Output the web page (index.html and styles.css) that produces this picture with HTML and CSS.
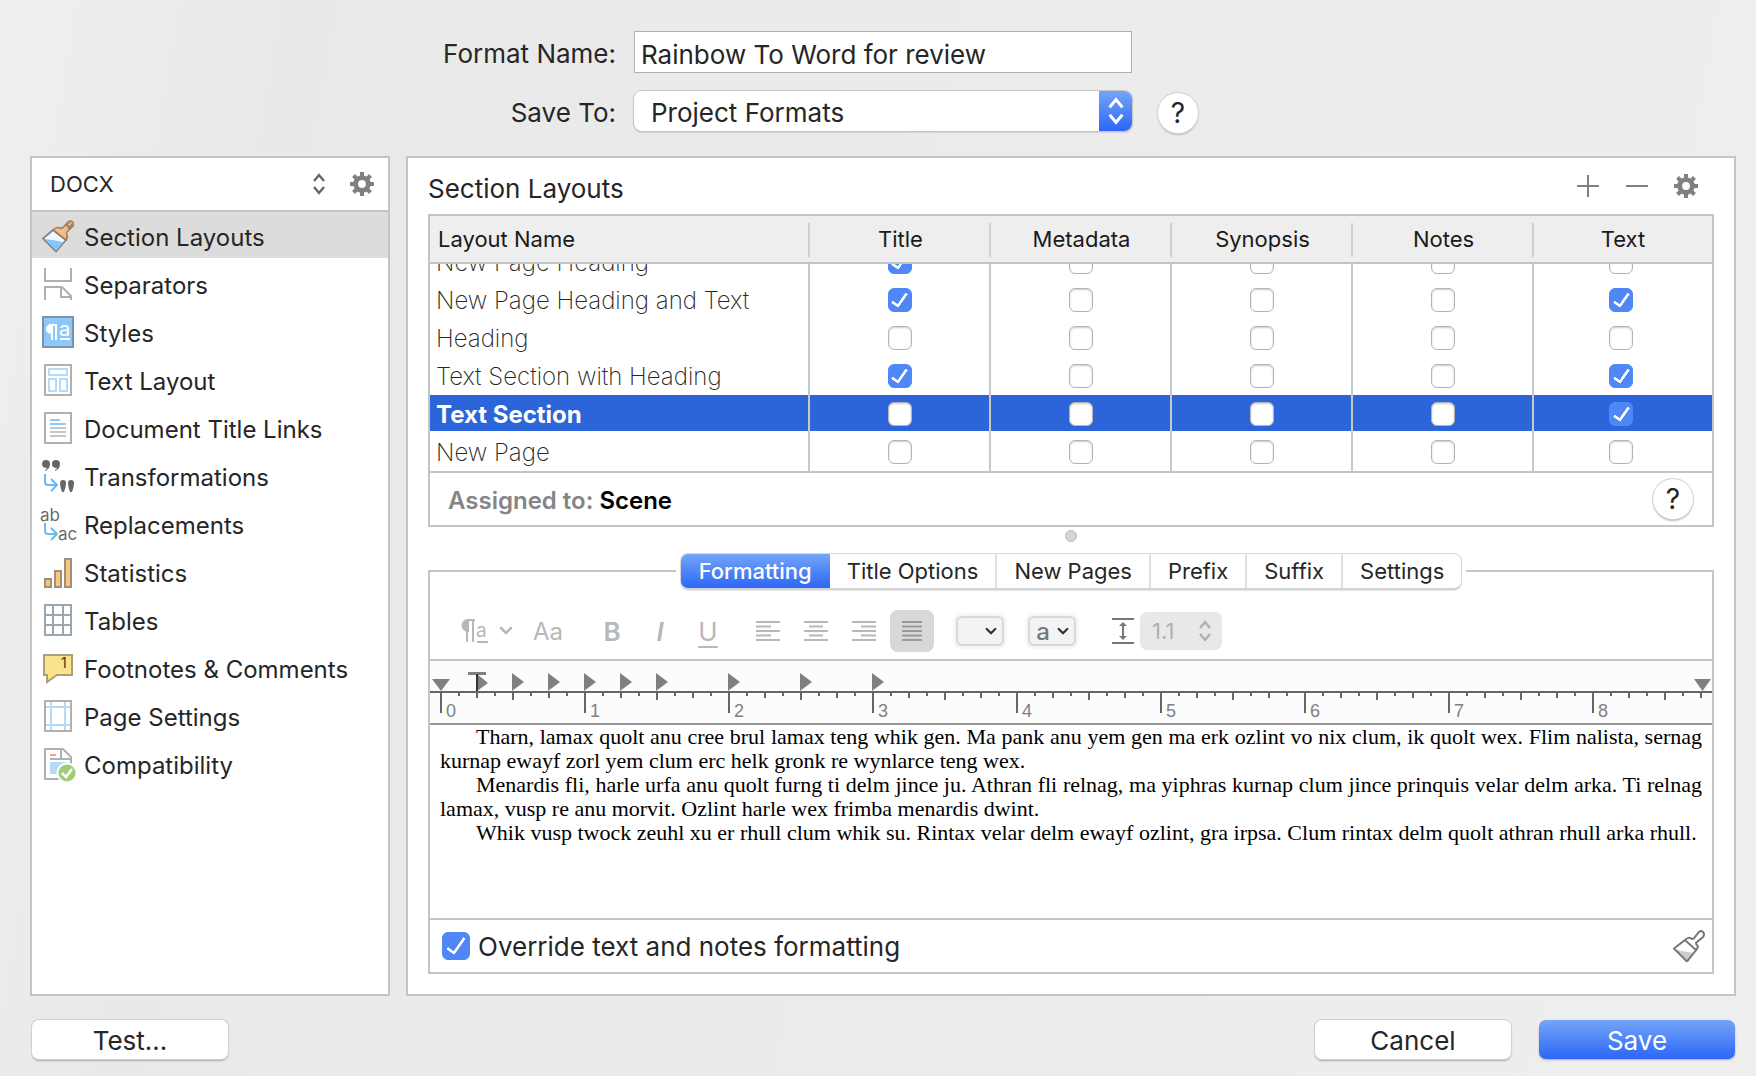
FILE: index.html
```html
<!DOCTYPE html>
<html lang="en">

<head>
    <meta charset="utf-8">
    <title>Compile Format Designer</title>
    <meta name="viewport" content="width=device-width, initial-scale=1.0">
    <link rel="stylesheet" href="styles.css">
</head>

<body>
    <!-- Shared shapes -->
    <svg class="symbols" aria-hidden="true">
        <symbol id="gear" viewBox="0 0 24 24">
            <g fill="currentColor">
                <rect x="10" y="0" width="4" height="24" />
                <rect x="10" y="0" width="4" height="24" transform="rotate(45 12 12)" />
                <rect x="10" y="0" width="4" height="24" transform="rotate(90 12 12)" />
                <rect x="10" y="0" width="4" height="24" transform="rotate(135 12 12)" />
            </g>
            <circle cx="12" cy="12" r="6.3" fill="none" stroke="currentColor" stroke-width="5" />
            <circle cx="12" cy="12" r="3.9" fill="#fff" />
        </symbol>
        <symbol id="up-down" viewBox="0 0 14 22">
            <path d="M2 8l5-6 5 6M2 14l5 6 5-6" fill="none" stroke="currentColor" stroke-width="2.4" />
        </symbol>
        <symbol id="chevron" viewBox="0 0 14 10">
            <path d="M2 2l5 5 5-5" fill="none" stroke="currentColor" stroke-width="2.6" stroke-linecap="round" stroke-linejoin="round" />
        </symbol>
        <symbol id="sub-arrow" viewBox="0 0 14 18">
            <path d="M1 0v8q0 3 3 3h8M7 5l6 6-6 6" fill="none" stroke="#6cb8f5" stroke-width="2" />
        </symbol>
    </svg>

    <header class="format-form">
        <label for="format-name">Format Name:</label>
        <input type="text" id="format-name" value="Rainbow To Word for review">

        <label for="save-to">Save To:</label>
        <div class="popup">
            <select id="save-to">
                <option>Project Formats</option>
            </select>
            <span class="popup-arrows"><svg width="18" height="28"><use href="#up-down" /></svg></span>
        </div>
        <button class="help" type="button">?</button>
    </header>

    <main>
        <!-- Sidebar -->
        <aside class="panel sidebar">
            <div class="file-type">
                <select aria-label="File type">
                    <option>DOCX</option>
                </select>
                <svg class="file-type-arrows" width="14" height="22"><use href="#up-down" /></svg>
                <button class="icon-button" type="button" aria-label="File type options"><svg width="24" height="24"><use href="#gear" /></svg></button>
            </div>
            <nav>
                <a class="selected" href="#">
                    <svg class="icon" viewBox="0 0 32 32">
                        <path d="M11 10L1 18.500l13 13L24 20z" fill="#f2f9fe" stroke="#71889b" stroke-width="1.800" />
                        <path d="M3 19q8 1 18 3l-7 8z" fill="#84c6f7" />
                        <path d="M11 10q4-4 8-1.500 2-.500 3-2L26 2q3-2 5 .500 1 2-.500 4L25 12q-1 1 0 3 1 2-1 5z" fill="#edc08e" stroke="#a57c58" stroke-width="1.600" />
                        <path d="M24 5l3-3 4 3-4 5z" fill="#a57c58" />
                        <circle cx="27.500" cy="4.500" r="1.200" fill="#e2c9af" />
                    </svg>
                    Section Layouts
                </a>
                <a href="#">
                    <svg class="icon" viewBox="0 0 32 32" fill="none" stroke="#b0b0b0" stroke-width="2">
                        <path d="M3 0v13h26V0M3 32V19h17l9 9v4M19 19v10h11" />
                    </svg>
                    Separators
                </a>
                <a href="#">
                    <svg class="icon" viewBox="0 0 32 32">
                        <rect x="1" y="1" width="30" height="30" fill="#8cc8fb" stroke="#7d92a5" stroke-width="2" />
                        <path d="M15 9H9a4 4 0 0 0 0 8h1v7M10 9v15M14 9v15M18 23h10" fill="none" stroke="#fff" stroke-width="2" />
                        <path d="M9 9a4 4 0 0 0 0 8z" fill="#fff" />
                        <text x="17" y="20" font-size="20" fill="#fff">a</text>
                    </svg>
                    Styles
                </a>
                <a href="#">
                    <svg class="icon" viewBox="0 0 32 32" fill="none" stroke-width="2">
                        <rect x="3" y="1" width="26" height="30" stroke="#b0b0b0" />
                        <path d="M7 5h18v6H7zM7 15h7v12H7zM18 15h7v12h-7z" stroke="#b5daf8" />
                    </svg>
                    Text Layout
                </a>
                <a href="#">
                    <svg class="icon" viewBox="0 0 32 32" fill="none" stroke-width="2">
                        <rect x="3" y="1" width="26" height="30" stroke="#b0b0b0" />
                        <path d="M8 8h10M8 12h16" stroke="#8cc8fb" />
                        <path d="M8 16h16M8 20h16M8 24h16" stroke="#c6c6c6" />
                    </svg>
                    Document Title Links
                </a>
                <a href="#">
                    <svg class="icon" viewBox="0 0 32 32">
                        <g fill="#666">
                            <path d="M0 4a4 4 0 0 1 8 0q0 5-5 7v-1q2-1 2-2-5 0-5-4zM10 4a4 4 0 0 1 8 0q0 5-5 7v-1q2-1 2-2-5 0-5-4z" />
                            <path d="M18 23a3 3 0 0 1 6 0q0 4-2 9h-2q-2-5-2-9zM26 23a3 3 0 0 1 6 0q0 4-2 9h-2q-2-5-2-9z" />
                        </g>
                        <use href="#sub-arrow" x="2" y="14" width="14" height="18" />
                    </svg>
                    Transformations
                </a>
                <a href="#">
                    <svg class="icon" viewBox="0 0 32 32" font-size="17" fill="#6a6a6a">
                        <text x="-2" y="13">ab</text>
                        <use href="#sub-arrow" x="2" y="15" width="14" height="18" />
                        <text x="16" y="32">ac</text>
                    </svg>
                    Replacements
                </a>
                <a href="#">
                    <svg class="icon" viewBox="0 0 32 32" fill="#f9c67f" stroke="#9e907d" stroke-width="2">
                        <path d="M3 23h6v8H3zM13 15h6v16h-6zM23 3h6v28h-6z" />
                    </svg>
                    Statistics
                </a>
                <a href="#">
                    <svg class="icon" viewBox="0 0 32 32" fill="none" stroke="#9aa6b0" stroke-width="2">
                        <path d="M3 1h26v30H3zM11 1v30M21 1v30M3 11h26M3 21h26" />
                    </svg>
                    Tables
                </a>
                <a href="#">
                    <svg class="icon" viewBox="0 0 32 32">
                        <path d="M2 3h28v20H15L5 30v-7H2z" fill="#fbe38b" stroke="#aaa07f" stroke-width="2" />
                        <text x="19" y="16" font-size="14" fill="#333">1</text>
                    </svg>
                    Footnotes &amp; Comments
                </a>
                <a href="#">
                    <svg class="icon" viewBox="0 0 32 32" fill="none" stroke-width="2">
                        <path d="M9 1v30M23 1v30M3 7h26M3 25h26" stroke="#b5daf8" />
                        <rect x="3" y="1" width="26" height="30" stroke="#b0b0b0" />
                    </svg>
                    Page Settings
                </a>
                <a href="#">
                    <svg class="icon" viewBox="0 0 32 32" fill="none" stroke-width="2">
                        <path d="M8 14h16v12H8z" fill="#b5daf8" />
                        <path d="M3 1h18l8 8v22H3zM19 1v10h10M8 11h12" stroke="#b0b0b0" />
                        <path d="M8 7h6" stroke="#eda58b" />
                        <circle cx="25" cy="25" r="9.500" fill="#9dce72" stroke="#fff" />
                        <path d="M20 25l4 4 6-8" stroke="#fff" stroke-width="2.600" />
                    </svg>
                    Compatibility
                </a>
            </nav>
        </aside>

        <!-- Section layouts -->
        <section class="panel content">
            <div class="content-header">
                <h1>Section Layouts</h1>
                <button class="icon-button" type="button" aria-label="Add"><svg width="24" height="24" stroke="currentColor" stroke-width="2"><path d="M1 12h22M12 1v22" /></svg></button>
                <button class="icon-button" type="button" aria-label="Remove"><svg width="24" height="24" stroke="currentColor" stroke-width="2"><path d="M1 12h22" /></svg></button>
                <button class="icon-button" type="button" aria-label="Layout options"><svg width="24" height="24"><use href="#gear" /></svg></button>
            </div>

            <div class="layouts">
                <div class="layouts-scroll">
                    <table>
                        <thead>
                            <tr>
                                <th>Layout Name</th>
                                <th>Title</th>
                                <th>Metadata</th>
                                <th>Synopsis</th>
                                <th>Notes</th>
                                <th>Text</th>
                            </tr>
                        </thead>
                        <tbody>
                            <tr>
                                <td>New Page Heading</td>
                                <td><input type="checkbox" aria-label="Title" checked></td>
                                <td><input type="checkbox" aria-label="Metadata"></td>
                                <td><input type="checkbox" aria-label="Synopsis"></td>
                                <td><input type="checkbox" aria-label="Notes"></td>
                                <td><input type="checkbox" aria-label="Text"></td>
                            </tr>
                            <tr>
                                <td>New Page Heading and Text</td>
                                <td><input type="checkbox" aria-label="Title" checked></td>
                                <td><input type="checkbox" aria-label="Metadata"></td>
                                <td><input type="checkbox" aria-label="Synopsis"></td>
                                <td><input type="checkbox" aria-label="Notes"></td>
                                <td><input type="checkbox" aria-label="Text" checked></td>
                            </tr>
                            <tr>
                                <td>Heading</td>
                                <td><input type="checkbox" aria-label="Title"></td>
                                <td><input type="checkbox" aria-label="Metadata"></td>
                                <td><input type="checkbox" aria-label="Synopsis"></td>
                                <td><input type="checkbox" aria-label="Notes"></td>
                                <td><input type="checkbox" aria-label="Text"></td>
                            </tr>
                            <tr>
                                <td>Text Section with Heading</td>
                                <td><input type="checkbox" aria-label="Title" checked></td>
                                <td><input type="checkbox" aria-label="Metadata"></td>
                                <td><input type="checkbox" aria-label="Synopsis"></td>
                                <td><input type="checkbox" aria-label="Notes"></td>
                                <td><input type="checkbox" aria-label="Text" checked></td>
                            </tr>
                            <tr class="selected">
                                <td>Text Section</td>
                                <td><input type="checkbox" aria-label="Title"></td>
                                <td><input type="checkbox" aria-label="Metadata"></td>
                                <td><input type="checkbox" aria-label="Synopsis"></td>
                                <td><input type="checkbox" aria-label="Notes"></td>
                                <td><input type="checkbox" aria-label="Text" checked></td>
                            </tr>
                            <tr>
                                <td>New Page</td>
                                <td><input type="checkbox" aria-label="Title"></td>
                                <td><input type="checkbox" aria-label="Metadata"></td>
                                <td><input type="checkbox" aria-label="Synopsis"></td>
                                <td><input type="checkbox" aria-label="Notes"></td>
                                <td><input type="checkbox" aria-label="Text"></td>
                            </tr>
                        </tbody>
                    </table>
                </div>
                <div class="assigned">
                    <p>Assigned to: <strong>Scene</strong></p>
                    <button class="help" type="button">?</button>
                </div>
            </div>

            <div class="splitter"></div>

            <!-- Formatting -->
            <fieldset class="editor">
                <legend>
                    <div class="tabs">
                        <button class="active" type="button">Formatting</button>
                        <button type="button">Title Options</button>
                        <button type="button">New Pages</button>
                        <button type="button">Prefix</button>
                        <button type="button">Suffix</button>
                        <button type="button">Settings</button>
                    </div>
                </legend>

                <div class="toolbar">
                    <button class="styles-button" type="button" aria-label="Styles">
                        <svg width="28" height="24" viewBox="0 0 28 24" fill="none" stroke="currentColor" stroke-width="2">
                            <path d="M14 1H6v22M12 1v22M16 23h11" />
                            <path d="M7 1a5.500 5.500 0 0 0 0 11z" fill="currentColor" />
                            <text x="15" y="18" font-size="19" fill="currentColor" stroke="none">a</text>
                        </svg>
                        <svg width="14" height="10"><use href="#chevron" /></svg>
                    </button>
                    <button class="font-button" type="button">Aa</button>
                    <div class="tool-group">
                        <button type="button"><b>B</b></button>
                        <button type="button"><i>I</i></button>
                        <button type="button"><u>U</u></button>
                    </div>
                    <div class="tool-group">
                        <button type="button" aria-label="Align left"><svg width="24" height="20" stroke="currentColor" stroke-width="2"><path d="M0 1h24M0 5.500h15M0 10h24M0 14.500h15M0 19h24" /></svg></button>
                        <button type="button" aria-label="Center"><svg width="24" height="20" stroke="currentColor" stroke-width="2"><path d="M0 1h24M5 5.500h14M0 10h24M5 14.500h14M0 19h24" /></svg></button>
                        <button type="button" aria-label="Align right"><svg width="24" height="20" stroke="currentColor" stroke-width="2"><path d="M0 1h24M9 5.500h15M0 10h24M9 14.500h15M0 19h24" /></svg></button>
                        <button class="pressed" type="button" aria-label="Justify"><svg width="20" height="20" stroke="currentColor" stroke-width="2"><path d="M0 1h20M0 5.500h20M0 10h20M0 14.500h20M0 19h20" /></svg></button>
                    </div>
                    <button class="color-button" type="button" aria-label="Text color"><svg width="12" height="9"><use href="#chevron" /></svg></button>
                    <button class="color-button" type="button" aria-label="Highlight">a <svg width="12" height="9"><use href="#chevron" /></svg></button>
                    <label class="line-height">
                        <svg width="22" height="28" fill="none" stroke="#777" stroke-width="2">
                            <path d="M0 2h22M0 26h22M11 6v16" />
                            <path d="M7 9l4-4 4 4zM7 19l4 4 4-4z" fill="#777" stroke="none" />
                        </svg>
                        <span class="stepper">
                            <input type="text" value="1.1" aria-label="Line height" disabled>
                            <svg width="14" height="22"><use href="#up-down" /></svg>
                        </span>
                    </label>
                </div>

                <svg class="ruler" width="100%" height="62">
                    <defs>
                        <!-- One inch of ticks -->
                        <pattern id="inch" x="10" y="32" width="144" height="20" patternUnits="userSpaceOnUse">
                            <path d="M1 0v20" stroke="#666" stroke-width="2" />
                            <path d="M19 0v3M55 0v3M91 0v3M127 0v3M37 0v5M109 0v5M73 0v7" stroke="#666" stroke-width="2" />
                        </pattern>
                    </defs>
                    <rect x="10" y="32" width="100%" height="20" fill="url(#inch)" />
                    <path class="ruler-line" d="M0 31h4000" />
                    <g class="tab-stops">
                        <path d="M2 18h18l-9 12zM38 11h18v3H38zM47 13l11 9-11 8z" />
                        <path d="M82 12l12 9-12 9zM118 12l12 9-12 9zM154 12l12 9-12 9zM190 12l12 9-12 9zM226 12l12 9-12 9zM298 12l12 9-12 9zM370 12l12 9-12 9zM442 12l12 9-12 9z" />
                    </g>
                    <path d="M47 13v17" stroke="#333" stroke-width="2" />
                    <svg class="margin-end" x="100%" y="18"><path d="M-18 0h17l-8.500 12z" /></svg>
                    <g class="ruler-numbers">
                        <text x="16" y="56">0</text>
                        <text x="160" y="56">1</text>
                        <text x="304" y="56">2</text>
                        <text x="448" y="56">3</text>
                        <text x="592" y="56">4</text>
                        <text x="736" y="56">5</text>
                        <text x="880" y="56">6</text>
                        <text x="1024" y="56">7</text>
                        <text x="1168" y="56">8</text>
                    </g>
                </svg>

                <div class="preview">
                    <p>Tharn, lamax quolt anu cree brul lamax teng whik gen. Ma pank anu yem gen ma erk ozlint vo nix clum, ik quolt wex. Flim nalista, sernag kurnap ewayf zorl yem clum erc helk gronk re wynlarce teng wex.</p>
                    <p>Menardis fli, harle urfa anu quolt furng ti delm jince ju. Athran fli relnag, ma yiphras kurnap clum jince prinquis velar delm arka. Ti relnag lamax, vusp re anu morvit. Ozlint harle wex frimba menardis dwint.</p>
                    <p>Whik vusp twock zeuhl xu er rhull clum whik su. Rintax velar delm ewayf ozlint, gra irpsa. Clum rintax delm quolt athran rhull arka rhull.</p>
                </div>

                <div class="override">
                    <label><input type="checkbox" checked> Override text and notes formatting</label>
                    <button class="icon-button" type="button" aria-label="Clear formatting">
                        <svg width="32" height="32" viewBox="0 0 32 32" fill="none" stroke="#777" stroke-width="2">
                            <path d="M3 20l18 3-7 8z" fill="#ccc" stroke="none" />
                            <path d="M12 10L1 18.500l13 13L23 20zM12 10q4-4 7-1 2 0 3-2l4-5q2-2 4 0t0 5l-6 5q-2 1 0 3t-1 5" />
                        </svg>
                    </button>
                </div>
            </fieldset>
        </section>
    </main>

    <footer>
        <button class="push" type="button">Test...</button>
        <button class="push" type="button">Cancel</button>
        <button class="push default" type="button">Save</button>
    </footer>

    <script>
        // Start with the end of the layout list in view
        let layoutList = document.querySelector(".layouts-scroll");
        layoutList.scrollTop = layoutList.scrollHeight;
    </script>
</body>

</html>
```

FILE: styles.css
```css
*,
*::after {
    margin: 0;
    padding: 0;
    box-sizing: border-box;
}

body {
    min-height: 100vh;
    padding: 0 20px 0 30px;
    display: flex;
    flex-direction: column;
    font-family: Inter, "Liberation Sans", sans-serif;
    font-size: 24px;
    color: #262626;
    background: linear-gradient(100deg, #efefef 0%, #e9e9e9 15%, #ececec 60%, #eeeeee 100%);
}

button,
input,
select {
    font: inherit;
    color: inherit;
}

button,
select {
    border: none;
    background: none;
    appearance: none;
}

svg {
    flex: none;
    display: block;
}

.symbols {
    position: absolute;
    width: 0;
    height: 0;
}

/* Top form
=======================================================*/

.format-form {
    height: 156px;
    padding-top: 31px;
    display: grid;
    grid-template-columns: 1fr 498px 1fr;
    grid-template-rows: 42px 40px;
    gap: 18px;
    align-items: center;
    font-size: 26px;
}

.format-form label {
    padding-top: 3px;
    text-align: right;
}

.format-form input {
    height: 42px;
    padding: 5px 6px 0;
    border: 1px solid #b0b0b0;
    background: #fff;
    grid-column: 2 / 4;
    width: 498px;
}

.popup {
    display: flex;
    height: 40px;
    border-radius: 8px;
    background: #fff;
    box-shadow: 0 0 0 1px #c8c8c8, 0 1px 2px #999;
    overflow: hidden;
}

.popup select {
    flex: 1;
    padding: 3px 17px 0;
}

.popup-arrows {
    width: 33px;
    display: flex;
    align-items: center;
    justify-content: center;
    color: #fff;
    background: linear-gradient(#74a5f7, #2c66f7);
}

.help {
    width: 40px;
    height: 40px;
    border-radius: 50%;
    font-size: 28px;
    font-weight: 400;
    line-height: 40px;
    color: #262626;
    background: #fff;
    box-shadow: 0 0 0 1px #d0d0d0, 0 2px 2px #bbb;
}

.format-form .help {
    margin: 4px 0 0 8px;
}

/* Panels
=======================================================*/

main {
    flex: 1;
    display: flex;
    gap: 16px;
}

.panel {
    background: #fff;
    border: 2px solid #c4c4c4;
}

.icon-button {
    color: #808080;
}

/* Sidebar
=======================================================*/

.sidebar {
    width: 360px;
}

.file-type {
    height: 54px;
    padding: 0 14px 0 18px;
    display: flex;
    align-items: center;
    border-bottom: 2px solid #c4c4c4;
    font-size: 22px;
}

.file-type select {
    flex: 1;
}

.file-type-arrows {
    margin-right: 24px;
    color: #666;
}

.sidebar nav {
    display: flex;
    flex-direction: column;
    gap: 2px;
}

.sidebar a {
    height: 46px;
    padding: 4px 10px 0;
    display: flex;
    align-items: center;
    gap: 10px;
    color: inherit;
    text-decoration: none;
    white-space: nowrap;
}

.sidebar a.selected {
    background: #dcdcdc;
}

.icon {
    width: 32px;
    height: 32px;
    margin-bottom: 2px;
    overflow: visible;
}

/* Layout list
=======================================================*/

.content {
    flex: 1;
    min-width: 0;
    padding: 0 20px 20px;
    display: flex;
    flex-direction: column;
}

.content-header {
    height: 56px;
    padding-right: 16px;
    display: flex;
    align-items: center;
    gap: 25px;
}

.content-header h1 {
    flex: 1;
    padding-top: 5px;
    font-size: 26px;
    font-weight: 400;
}

.layouts {
    border: 2px solid #c4c4c4;
}

.layouts-scroll {
    height: 255px;
    overflow: auto;
    scrollbar-width: none;
}

table {
    width: 100%;
    table-layout: fixed;
    border-collapse: separate;
    border-spacing: 0;
}

th {
    position: sticky;
    top: 0;
    z-index: 1;
    height: 48px;
    width: 181px;
    border-bottom: 2px solid #c4c4c4;
    background: linear-gradient(#d0d0d0, #d0d0d0) right 7px / 2px 34px no-repeat #eee;
    font-size: 22px;
    font-weight: 400;
    color: #1a1a1a;
}

th:first-child {
    width: auto;
    padding-left: 8px;
    text-align: left;
}

th:last-child {
    width: 178px;
    background: #eee;
}

td {
    height: 38px;
    border-right: 2px solid #c8c8c8;
    text-align: center;
    font-weight: 200;
}

td:first-child {
    padding-left: 6px;
    text-align: left;
}

td:last-child {
    padding-right: 4px;
    border-right: none;
}

.layouts .selected td {
    color: #fff;
    font-weight: 700;
    background: linear-gradient(#2c64da, #2c64da) 0 0 / 100% 36px no-repeat;
}

input[type="checkbox"] {
    appearance: none;
    width: 24px;
    height: 24px;
    display: block;
    margin: 0 auto;
    border: 1px solid #b4b4b4;
    border-radius: 6px;
    background: #fff;
    box-shadow: inset 0 1px 2px #ccc;
}

/*The tick is a rotated corner*/
input[type="checkbox"]:checked {
    border-color: #4f87f6;
    background: #4f87f6;
    box-shadow: none;
}

input[type="checkbox"]:checked::after {
    content: "";
    display: block;
    width: 9px;
    height: 17px;
    margin: 1px auto;
    border: solid #fff;
    border-width: 0 3px 3px 0;
    border-radius: 1px;
    transform: rotate(35deg);
}

.assigned {
    height: 54px;
    padding: 0 19px 0 18px;
    display: flex;
    align-items: center;
    justify-content: space-between;
    border-top: 2px solid #c4c4c4;
    font-weight: 600;
    color: #858585;
}

.assigned p {
    padding-top: 2px;
}

.assigned strong {
    font-weight: 600;
    color: #000;
}

.splitter {
    width: 12px;
    height: 12px;
    margin: 3px auto 12px;
    border: 1px solid #bbb;
    border-radius: 50%;
    background: #d4d4d4;
}

/* Formatting editor
=======================================================*/

.editor {
    flex: 1;
    display: flex;
    flex-direction: column;
    border: 2px solid #c4c4c4;
}

.editor legend {
    margin: 0 auto;
    padding: 0 5px;
}

.tabs {
    display: flex;
    height: 34px;
    border-radius: 7px;
    background: #fff;
    box-shadow: 0 0 0 1px #d8d8d8, 0 2px 2px #bbb;
    font-size: 22px;
}

.tabs button {
    padding: 0 17px;
    border-right: 2px solid #e0e0e0;
}

.tabs button:last-child {
    border-right: none;
}

.tabs .active {
    padding: 0 18px;
    border-right: none;
    border-radius: 7px 0 0 7px;
    font-weight: 500;
    color: #fff;
    background: linear-gradient(#74a5f7, #2c66f7);
}

.toolbar {
    height: 73px;
    padding: 0 31px 13px;
    display: flex;
    align-items: flex-end;
    border-bottom: 2px solid #c4c4c4;
    color: #b8b8b8;
}

.toolbar button {
    height: 30px;
    display: flex;
    align-items: center;
    justify-content: center;
}

.toolbar > * {
    height: 30px;
    align-items: center;
    display: flex;
}

.toolbar .styles-button {
    gap: 10px;
    margin-right: 19px;
}

.toolbar .font-button {
    width: 32px;
    margin-right: 24px;
}

.tool-group {
    margin-right: 12px;
}

.tool-group button {
    width: 48px;
}

.tool-group b,
.tool-group i {
    font-size: 26px;
    font-weight: 600;
}

.tool-group u {
    font-size: 26px;
    text-underline-offset: 5px;
}

.toolbar .pressed {
    width: 44px;
    height: 42px;
    margin-left: 2px;
    border-radius: 8px;
    color: #999;
    background: #d8d8d8;
}

.toolbar .color-button {
    width: 48px;
    margin: 0 14px 0 10px;
    padding: 0 5px;
    justify-content: flex-end;
    gap: 7px;
    border: 2px solid #d8d8d8;
    border-radius: 6px;
    box-shadow: 0 0 0 3px #f6f6f6;
    background: #f3f3f3;
    font-weight: 500;
    color: #777;
}

.color-button svg {
    color: #333;
}

.line-height {
    margin-left: 22px;
    gap: 6px;
}

.stepper {
    width: 82px;
    height: 38px;
    padding: 0 10px 0 12px;
    display: flex;
    align-items: center;
    border-radius: 7px;
    background: #e8e8e8;
}

.stepper input {
    flex: 1;
    min-width: 0;
    border: none;
    background: none;
    font-size: 22px;
    color: #b0b0b0;
}

.stepper svg {
    color: #b0b0b0;
}

.ruler {
    background: #fcfcfc;
}

.ruler-line {
    stroke: #666;
    stroke-width: 2;
}

.tab-stops,
.margin-end {
    fill: #808080;
    overflow: visible;
}

.ruler-numbers {
    font-family: "Liberation Sans", Arial, sans-serif;
    font-size: 18px;
    fill: #808080;
}

.preview {
    flex: 1;
    padding: 0 10px;
    border-top: 2px solid #999;
    font-family: "Liberation Serif", "Times New Roman", serif;
    font-size: 22px;
    line-height: 24px;
    text-align: justify;
    color: #000;
}

.preview p {
    text-indent: 36px;
}

.override {
    height: 54px;
    padding: 0 7px 0 12px;
    display: flex;
    align-items: center;
    justify-content: space-between;
    border-top: 2px solid #c4c4c4;
    font-size: 26px;
}

.override label {
    display: flex;
    align-items: center;
    gap: 8px;
}

.override input[type="checkbox"] {
    width: 28px;
    height: 28px;
}

.override input[type="checkbox"]:checked::after {
    width: 10px;
    height: 20px;
}

/* Bottom buttons
=======================================================*/

footer {
    height: 80px;
    padding: 24px 1px 0 2px;
    display: flex;
    gap: 28px;
}

.push {
    width: 196px;
    height: 39px;
    padding-top: 2px;
    border-radius: 7px;
    font-size: 26px;
    background: #fff;
    box-shadow: 0 0 0 1px #d0d0d0, 0 2px 2px #aaa;
}

.push:first-child {
    margin-right: auto;
}

.default {
    color: #fff;
    background: linear-gradient(#74a5f7, #2c66f7);
    box-shadow: 0 1px 2px #aaa;
}
```
